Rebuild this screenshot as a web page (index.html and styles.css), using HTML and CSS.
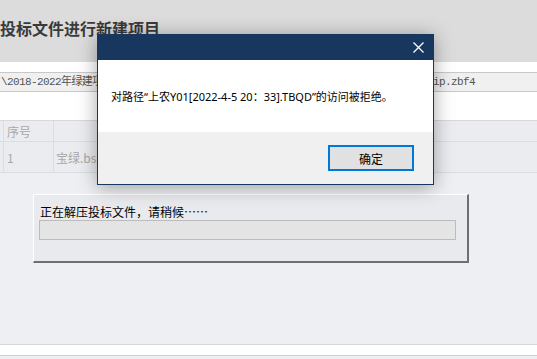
FILE: index.html
```html
<!DOCTYPE html>
<html>
<head>
	<title>投标文件进行新建项目</title>
  <link rel="stylesheet" href="styles.css">
</head>
<body>
	<div class="page">
		<div class="head">
			<h1 class="title">投标文件进行新建项目</h1>
		</div>

		<div class="path-area">
			<div class="pathbar">
				<span>\2018-2022年绿建项目\投标文件\宝绿.bs</span>
				<span class="path-end">ip.zbf4</span>
			</div>
		</div>

		<!-- file list -->
		<div class="grid-head">
			<div class="cell cell-no">序号</div>
			<div class="cell cell-name"></div>
		</div>
		<div class="grid-row">
			<div class="cell cell-no">1</div>
			<div class="cell cell-name">宝绿.bs</div>
		</div>

		<div class="fill"></div>
		<div class="strip"></div>
		<div class="status"></div>

		<!-- unzip progress -->
		<div class="progress">
			<p class="progress-text">正在解压投标文件，请稍候……</p>
			<div class="progress-bar"></div>
		</div>

		<!-- error message box -->
		<div class="dialog">
			<div class="dlg-title">
				<span class="dlg-close">
					<svg width="11" height="11" viewBox="0 0 11 11">
						<path d="M0.5 0.5 L10.5 10.5 M10.5 0.5 L0.5 10.5" stroke="#ffffff" stroke-width="1.3" fill="none"/>
					</svg>
				</span>
			</div>
			<div class="dlg-body">对路径“上农Y01[2022-4-5 20：33].TBQD”的访问被拒绝。</div>
			<div class="dlg-foot">
				<button class="ok-btn">确定</button>
			</div>
		</div>
	</div>
</body>
</html>
```

FILE: styles.css
```css
body {
	margin: 0;
}

.page {
	position: relative;
	display: flex;
	flex-direction: column;
	width: 537px;
	height: 359px;
	overflow: hidden;
	background-color: #eeeff2;
	font-family: "Noto Sans CJK SC", sans-serif;
}

.head {
	height: 62px;
	background-color: #dcdcdc;
}

.title {
	margin: 0;
	padding-top: 17px;
	font-size: 16px;
	line-height: 22px;
	font-weight: bold;
	color: #3a3a3a;
}

.path-area {
	background-color: #fff;
	padding: 10px 0 28px;
}

.pathbar {
	display: flex;
	height: 18px;
	padding: 0 62px 0 1px;
	border-top: 1px solid #c8c8c8;
	border-bottom: 1px solid #c8c8c8;
	background-color: #f0f0f0;
	font-family: "Liberation Mono", "Noto Sans CJK SC", monospace;
	font-size: 11px;
	line-height: 18px;
	letter-spacing: -0.6px;
	color: #555;
	white-space: nowrap;
	overflow: hidden;
}

.path-end {
	margin-left: auto;
}

.grid-head {
	display: flex;
	height: 20px;
	border-top: 1px solid #d8d8d8;
	border-bottom: 1px solid #dcdde0;
	background-color: #ebecef;
}

.grid-row {
	display: flex;
	height: 30px;
	border-bottom: 1px solid #dcdde0;
	background-color: #ebecef;
}

.cell {
	font-size: 12px;
	color: #a8a8a8;
	display: flex;
	align-items: center;
	border-left: 1px solid #dcdde0;
}

.cell-no {
	margin-left: 3px;
	width: 46px;
	padding-left: 3px;
}

.cell-name {
	flex: 1;
	padding-left: 2px;
}

.fill {
	flex: 1;
}

.strip {
	height: 10px;
	border-top: 1px solid #d6d6d6;
	border-bottom: 1px solid #d0d0d0;
	background-color: #fff;
}

.status {
	height: 3px;
	background-color: #eeeff2;
}

.progress {
	position: absolute;
	left: 33px;
	top: 194px;
	width: 436px;
	height: 69px;
	box-sizing: border-box;
	padding: 9px 0 0 5px;
	background-color: #e9eaee;
	border-top: 1px solid #fff;
	border-left: 1px solid #fff;
	border-right: 2px solid #6f6f6f;
	border-bottom: 2px solid #6f6f6f;
}

.progress-text {
	margin: 0 0 0 1px;
	font-size: 12px;
	line-height: 16px;
	color: #000;
}

.progress-bar {
	width: 417px;
	height: 20px;
	box-sizing: border-box;
	border: 1px solid #bcbcbc;
	background-color: #e4e4e4;
}

.dialog {
	position: absolute;
	left: 97px;
	top: 34px;
	width: 335px;
	border: 1px solid #17375e;
	box-shadow: 0 2px 18px rgba(0, 0, 0, 0.35);
}

.dlg-title {
	display: flex;
	justify-content: flex-end;
	height: 25px;
	background-color: #17375e;
}

.dlg-close {
	display: flex;
	align-items: center;
	justify-content: center;
	width: 30px;
}

.dlg-body {
	height: 72px;
	box-sizing: border-box;
	padding: 28px 0 0 13px;
	background-color: #fff;
	font-family: "Noto Sans", "Noto Sans CJK SC", sans-serif;
	font-size: 11px;
	line-height: 18px;
	color: #000;
	white-space: nowrap;
}

.dlg-foot {
	display: flex;
	justify-content: flex-end;
	height: 52px;
	box-sizing: border-box;
	padding: 13px 19px 0 0;
	background-color: #f0f0f0;
}

.ok-btn {
	width: 86px;
	height: 26px;
	border: 2px solid #0078d7;
	background-color: #e1e1e1;
	font-family: "Noto Sans CJK SC", sans-serif;
	font-size: 12px;
	color: #000;
	padding: 0;
}
```
